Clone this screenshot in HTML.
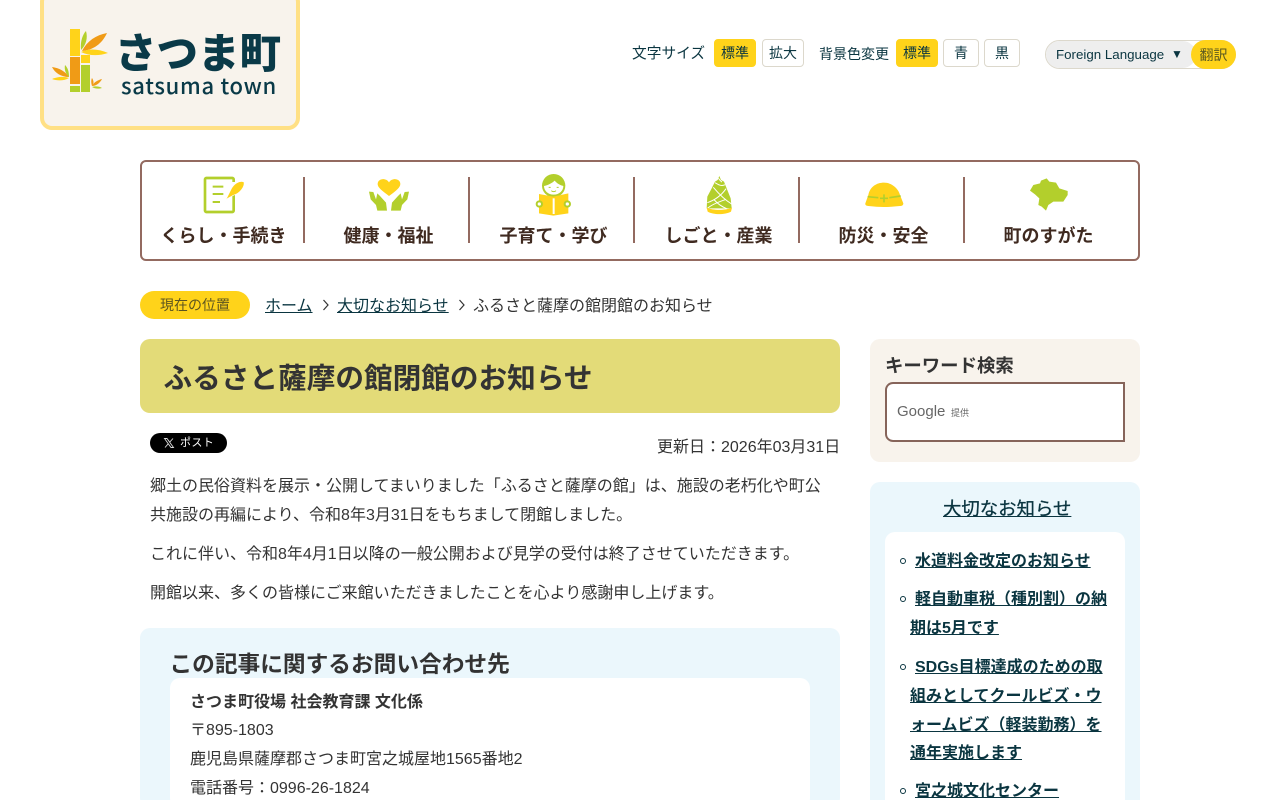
<!DOCTYPE html>
<html lang="ja"><head><meta charset="utf-8"><title>ふるさと薩摩の館閉館のお知らせ</title>
<style>
html,body{margin:0;padding:0;background:#fff;width:1280px;height:800px;overflow:hidden}
body{position:relative;font-family:"Liberation Sans","Noto Sans CJK JP",sans-serif;color:#333;font-size:16px}
.a{position:absolute;white-space:nowrap}
.btn{position:absolute;top:39px;height:26px;line-height:26px;text-align:center;font-size:14px;border:1px solid #dcd8cc;border-radius:4px;background:#fff;color:#0a3540}
.btn.on{background:#ffd31a;border-color:#ffd31a}
.nav{position:absolute;top:223px;height:26px;line-height:26px;width:165px;text-align:center;font-size:18px;font-weight:700;color:#3f2a20}
.sep{position:absolute;top:177px;width:2px;height:66px;background:#936a60}
svg{position:absolute;overflow:visible}
a{color:#0a3540;text-decoration:underline}
.p{font-size:16px;line-height:29px;color:#333}
.li{font-size:16px;font-weight:700;line-height:29px}
.dot{position:absolute;width:4px;height:4px;border:1.5px solid #0a3540;border-radius:50%}
</style></head><body>

<div class="a" style="left:40px;top:-10px;width:252px;height:132px;background:#f8f3ec;border:4px solid #ffe085;border-radius:12px"></div>
<svg style="left:45px;top:20px" width="70" height="80" viewBox="0 0 70 80">
<rect x="25" y="9" width="10" height="27" fill="#ffd31a"/>
<rect x="25" y="37" width="10" height="27" fill="#f09b16"/>
<rect x="25" y="66" width="10" height="6" fill="#b3cf2c"/>
<rect x="36" y="35" width="9" height="8" fill="#ffd31a"/>
<rect x="36" y="45" width="9" height="27" fill="#b3cf2c"/>
<path d="M36 30C35 21 38 14 41 11C43 18 41 25 36 30Z" fill="#b3cf2c"/>
<path d="M37 31C42 21 51 15 62 13C57 24 48 30 37 31Z" fill="#f09b16"/>
<path d="M36 32C44 28 54 29 63 33C54 36 44 36 36 32Z" fill="#ffd31a"/>
<path d="M7 47C14 48 20 51 24 57C16 57 10 53 7 47Z" fill="#f09b16"/>
<path d="M20 45C23 48 24 52 24 57C21 54 19 50 20 45Z" fill="#b3cf2c"/>
<path d="M7 59C12 57 18 56 24 58C19 61 12 61 7 59Z" fill="#ffd31a"/>
<path d="M47 66C49 62 53 60 57 59C55 63 51 66 47 66Z" fill="#f09b16"/>
<path d="M47 58C49 61 49 64 47 66C46 63 46 60 47 58Z" fill="#f09b16"/>
<path d="M47 67C50 66 54 66 57 68C54 69 50 69 47 67Z" fill="#b3cf2c"/>
</svg>
<div class="a" style="left:115px;top:24px;font-size:41.500px;line-height:52px;font-weight:900;color:#0a3a48;font-family:'Noto Sans CJK JP',sans-serif">さつま町</div>
<div class="a" style="left:121px;top:68px;font-size:22px;line-height:34px;font-weight:500;color:#0a3a48;letter-spacing:.7px;font-family:'Noto Sans CJK JP',sans-serif">satsuma town</div>

<div class="a" style="left:632px;top:44px;font-size:14.720px;line-height:20px;color:#0a3540">文字サイズ</div>
<div class="btn on" style="left:714px;width:40px">標準</div>
<div class="btn" style="left:762px;width:40px">拡大</div>
<div class="a" style="left:819px;top:44px;font-size:14px;line-height:20px;color:#0a3540">背景色変更</div>
<div class="btn on" style="left:896px;width:40px">標準</div>
<div class="btn" style="left:943px;width:34px">青</div>
<div class="btn" style="left:984px;width:34px">黒</div>
<div class="a" style="left:1045px;top:40px;width:189px;height:27px;border:1px solid #dcd8cc;border-radius:15px;background:#fff"></div>
<div class="a" style="left:1046px;top:41px;width:150px;height:27px;background:#eee;border-radius:14px;line-height:27px;font-size:13.330px;color:#0a3540;text-indent:10px">Foreign Language<span style="position:absolute;left:125px;top:0;text-indent:0;font-size:12px">▼</span></div>
<div class="a" style="left:1191px;top:40px;width:45px;height:29px;background:#ffd31a;border-radius:15px;text-align:center;line-height:31px;font-size:14px;color:#5c5a20">翻訳</div>

<div class="a" style="left:140px;top:160px;width:996px;height:97px;border:2px solid #936a60;border-radius:6px"></div>
<div class="sep" style="left:303px"></div><div class="sep" style="left:468px"></div><div class="sep" style="left:633px"></div><div class="sep" style="left:798px"></div><div class="sep" style="left:963px"></div>
<div class="nav" style="left:141px">くらし・手続き</div>
<div class="nav" style="left:306px">健康・福祉</div>
<div class="nav" style="left:471px">子育て・学び</div>
<div class="nav" style="left:636px">しごと・産業</div>
<div class="nav" style="left:801px">防災・安全</div>
<div class="nav" style="left:966px">町のすがた</div>

<svg style="left:140px;top:160px" width="340" height="105" viewBox="0 0 1020 315">
<path d="M281 92V152a4 4 0 0 1-4 4H199a4 4 0 0 1-4-4V58a4 4 0 0 1 4-4H277a4 4 0 0 1 4 4V66" fill="none" stroke="#b3cf2c" stroke-width="8"/>
<path d="M218 80H250M218 102H250M218 126H240" stroke="#b3cf2c" stroke-width="6" fill="none"/>
<path d="M252 130L272 90C280 72 298 60 312 66C315 80 300 100 280 106L262 116Z" fill="#ffd31a" stroke="#fff" stroke-width="2"/>
<path d="M747 108C725 92 713 82 713 72C713 55 738 52 747 67C756 52 781 55 781 72C781 82 769 92 747 108Z" fill="#ffd31a"/>
<path d="M687 95L700 96L708 118L712 100L720 108L738 128L741 152H712L708 135L692 118Z" fill="#b3cf2c"/>
<path d="M807 95L794 96L786 118L782 100L774 108L756 128L753 152H782L786 135L802 118Z" fill="#b3cf2c"/>
</svg>
<svg style="left:470px;top:160px" width="340" height="105" viewBox="0 0 1020 315">
<circle cx="251" cy="77" r="35" fill="#b3cf2c"/>
<path d="M222 78C235 76 248 68 254 62C262 72 272 76 280 78C280 92 268 104 251 104C234 104 222 92 222 78Z" fill="#fff"/>
<path d="M236 82H242M260 82H266M244 92C248 96 254 96 258 92" stroke="#b3cf2c" stroke-width="3" fill="none"/>
<path d="M207 102L250 110L295 100V160L250 167L207 160Z" fill="#ffd31a"/>
<rect x="248" y="115" width="6" height="47" fill="#fff"/>
<circle cx="208" cy="132" r="8" fill="#fff" stroke="#b3cf2c" stroke-width="6"/>
<circle cx="292" cy="132" r="8" fill="#fff" stroke="#b3cf2c" stroke-width="6"/>
<path d="M748 48L753 60L762 65L770 85L782 115L785 145H710L712 110L725 85L735 65L743 60Z" fill="#b3cf2c"/>
<path d="M712 128C735 120 755 105 768 86M785 132C765 120 745 100 730 82M735 68C745 74 755 80 765 74M745 55C750 60 752 64 756 66M712 145C730 130 750 125 768 118M770 146C755 140 742 130 733 120" stroke="#fff" stroke-width="3" fill="none"/>
<path d="M710 143C730 152 765 152 786 143L783 155C765 165 730 165 713 155Z" fill="#ffd31a"/>
</svg>
<svg style="left:800px;top:160px" width="340" height="105" viewBox="0 0 1020 315">
<path d="M205 105C210 80 230 68 252 68C275 68 295 85 300 105L310 130C310 136 305 138 300 138C260 142 240 142 205 138C198 138 195 135 196 130Z" fill="#ffd31a"/>
<path d="M203 110L235 113M268 113L302 108M252 103V127M240 115H264" stroke="#b3cf2c" stroke-width="5" fill="none"/>
<path d="M690 92L700 75L720 70L723 62L740 55L748 65L768 68L778 85L803 93V105L790 125H760L745 135L738 152L725 140L715 135L718 115L705 103Z" fill="#b3cf2c"/>
</svg>

<div class="a" style="left:140px;top:291px;width:110px;height:28px;background:#ffd31a;border-radius:14px;text-align:center;line-height:29px;font-size:14px;color:#5c5420">現在の位置</div>
<a class="a" style="left:265px;top:297px;line-height:20px;font-size:16px">ホーム</a>
<svg style="left:322px;top:299px" width="8" height="12" viewBox="0 0 8 12"><path d="M1.500 1L6 6L1.500 11" fill="none" stroke="#333" stroke-width="1.200"/></svg>
<a class="a" style="left:337px;top:297px;line-height:20px;font-size:16px">大切なお知らせ</a>
<svg style="left:458px;top:299px" width="8" height="12" viewBox="0 0 8 12"><path d="M1.500 1L6 6L1.500 11" fill="none" stroke="#333" stroke-width="1.200"/></svg>
<div class="a" style="left:473px;top:297px;line-height:20px;font-size:16px">ふるさと薩摩の館閉館のお知らせ</div>

<div class="a" style="left:140px;top:339px;width:700px;height:74px;background:#e3db78;border-radius:10px"></div>
<div class="a" style="left:163.500px;top:359px;font-size:28.650px;line-height:40px;font-weight:700;color:#333">ふるさと薩摩の館閉館のお知らせ</div>

<div class="a" style="left:150px;top:433px;width:77px;height:20px;background:#000;border-radius:10px;color:#fff;font-size:11px;line-height:20px"><svg style="left:14px;top:5px" width="10" height="10" viewBox="0 0 10 10"><path d="M.5.5H3L9.500 9.500H7ZM9 .5L5.500 4.300M4.300 5.700L1 9.500" stroke="#ddd" stroke-width=".9" fill="none"/></svg><span style="position:absolute;left:30px;letter-spacing:.4px">ポスト</span></div>
<div class="a" style="left:657px;top:438px;line-height:20px">更新日：2026年03月31日</div>

<div class="a p" style="left:150px;top:472px">郷土の民俗資料を展示・公開してまいりました「ふるさと薩摩の館」は、施設の老朽化や町公</div>
<div class="a p" style="left:150px;top:501px">共施設の再編により、令和8年3月31日をもちまして閉館しました。</div>
<div class="a p" style="left:150px;top:540px">これに伴い、令和8年4月1日以降の一般公開および見学の受付は終了させていただきます。</div>
<div class="a p" style="left:150px;top:579px">開館以来、多くの皆様にご来館いただきましたことを心より感謝申し上げます。</div>

<div class="a" style="left:140px;top:628px;width:700px;height:180px;background:#ebf7fc;border-radius:10px"></div>
<div class="a" style="left:169.500px;top:649px;font-size:22.700px;line-height:30px;font-weight:700;color:#333">この記事に関するお問い合わせ先</div>
<div class="a" style="left:170px;top:678px;width:640px;height:130px;background:#fff;border-radius:10px"></div>
<div class="a p" style="left:190px;top:688px;font-weight:700">さつま町役場 社会教育課 文化係</div>
<div class="a p" style="left:190px;top:716px">〒895-1803</div>
<div class="a p" style="left:190px;top:745px">鹿児島県薩摩郡さつま町宮之城屋地1565番地2</div>
<div class="a p" style="left:190px;top:774px">電話番号：0996-26-1824</div>

<div class="a" style="left:870px;top:339px;width:270px;height:123px;background:#f8f3ec;border-radius:10px"></div>
<div class="a" style="left:885px;top:352px;font-size:18.400px;line-height:28px;font-weight:700;color:#333">キーワード検索</div>
<div class="a" style="left:885px;top:382px;width:236px;height:56px;background:#fff;border:2px solid #86645a;border-radius:8px 0 0 8px"></div>
<div class="a" style="left:897px;top:402px;font-size:15px;line-height:20px;color:#666">Google</div>
<div class="a" style="left:951px;top:406px;font-size:9px;line-height:14px;color:#666">提供</div>

<div class="a" style="left:870px;top:482px;width:270px;height:330px;background:#ebf7fc;border-radius:10px"></div>
<a class="a" style="left:943px;top:495px;font-size:18.400px;line-height:28px;color:#0a3540;-webkit-text-stroke:.3px #0a3540">大切なお知らせ</a>
<div class="a" style="left:885px;top:532px;width:240px;height:280px;background:#fff;border-radius:10px"></div>
<div class="dot" style="left:899.500px;top:558px"></div>
<a class="a li" style="left:915px;top:547px">水道料金改定のお知らせ</a>
<div class="dot" style="left:899.500px;top:596px"></div>
<a class="a li" style="left:915px;top:585px">軽自動車税（種別割）の納</a>
<a class="a li" style="left:910px;top:614px">期は5月です</a>
<div class="dot" style="left:899.500px;top:664px"></div>
<a class="a li" style="left:915px;top:653px">SDGs目標達成のための取</a>
<a class="a li" style="left:910px;top:682px">組みとしてクールビズ・ウ</a>
<a class="a li" style="left:910px;top:711px">ォームビズ（軽装勤務）を</a>
<a class="a li" style="left:910px;top:739px">通年実施します</a>
<div class="dot" style="left:899.500px;top:788px"></div>
<a class="a li" style="left:915px;top:777px">宮之城文化センター</a>
</body></html>
